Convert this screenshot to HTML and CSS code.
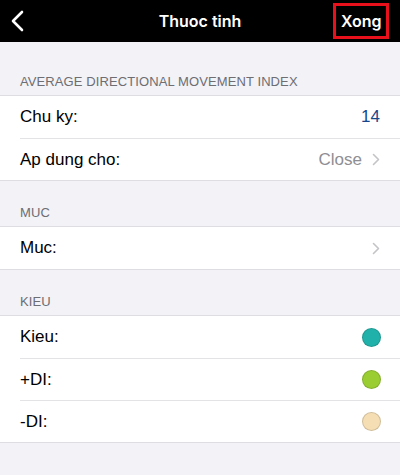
FILE: index.html
```html
<!DOCTYPE html>
<html>
<head>
<meta charset="utf-8">
<link rel="stylesheet" href="styles.css">
</head>
<body>
<div class="nav">
  <div class="nav-back">
    <svg width="14" height="22" viewBox="0 0 14 22"><polyline points="11,2 2,11 11,20" fill="none" stroke="#fff" stroke-width="2.6" stroke-linecap="round" stroke-linejoin="round"/></svg>
  </div>
  <div class="nav-title">Thuoc tinh</div>
  <div class="nav-done">Xong</div>
</div>

<div class="section-header first">AVERAGE DIRECTIONAL MOVEMENT INDEX</div>
<div class="group">
  <div class="row"><span class="label">Chu ky:</span><span class="value blue">14</span></div>
  <div class="row"><span class="label">Ap dung cho:</span><span class="value gray">Close</span><span class="chev"><svg width="8" height="13" viewBox="0 0 8 13"><polyline points="1.5,1.5 6.5,6.5 1.5,11.5" fill="none" stroke="#c4c4c8" stroke-width="1.6" stroke-linecap="round" stroke-linejoin="round"/></svg></span></div>
</div>

<div class="section-header">MUC</div>
<div class="group">
  <div class="row"><span class="label">Muc:</span><span class="chev"><svg width="8" height="13" viewBox="0 0 8 13"><polyline points="1.5,1.5 6.5,6.5 1.5,11.5" fill="none" stroke="#c4c4c8" stroke-width="1.6" stroke-linecap="round" stroke-linejoin="round"/></svg></span></div>
</div>

<div class="section-header">KIEU</div>
<div class="group">
  <div class="row"><span class="label">Kieu:</span><span class="dot teal"></span></div>
  <div class="row"><span class="label">+DI:</span><span class="dot green"></span></div>
  <div class="row"><span class="label">-DI:</span><span class="dot wheat"></span></div>
</div>
</body>
</html>
```

FILE: styles.css
```css
html, body {
  margin: 0;
  padding: 0;
  background: #f2f2f7;
  font-family: "Liberation Sans", Arial, sans-serif;
}

.nav {
  height: 42px;
  background: #000;
  display: flex;
  align-items: center;
  position: relative;
}

.nav-back {
  width: 14px;
  height: 22px;
  margin-left: 11px;
  display: flex;
}

.nav-title {
  position: absolute;
  left: 0;
  right: 0;
  top: 0;
  height: 42px;
  line-height: 42px;
  text-align: center;
  color: #fff;
  font-family: Inter, "Liberation Sans", sans-serif;
  font-size: 16px;
  font-weight: 600;
  pointer-events: none;
}

.nav-done {
  margin-left: auto;
  margin-right: 11px;
  border: 3px solid #e8101a;
  height: 30px;
  line-height: 30px;
  padding: 0 5px 0 5px;
  width: 40px;
  text-align: center;
  color: #fff;
  font-family: Inter, "Liberation Sans", sans-serif;
  font-size: 16px;
  font-weight: 600;
}

.section-header {
  padding: 24px 20px 5px 20px;
  font-size: 13px;
  line-height: 16px;
  color: #6d6d72;
  letter-spacing: 0.1px;
}

.section-header.first {
  padding-top: 32px;
}

.group {
  background: #fff;
  border-top: 1px solid #dedee2;
  border-bottom: 1px solid #dedee2;
}

.row {
  height: 42px;
  display: flex;
  align-items: center;
  padding: 0 20px;
}

.row + .row {
  height: 41px;
  border-top: 1px solid #e3e3e6;
  margin-left: 20px;
  padding-left: 0;
}

.label {
  font-size: 17px;
  color: #000;
  flex: 1;
}

.value {
  font-size: 17px;
}

.value.blue {
  color: #16478c;
}

.value.gray {
  color: #8e8e93;
}

.chev {
  display: flex;
  margin-left: 10px;
}

.dot {
  width: 17px;
  height: 17px;
  border-radius: 50%;
  border: 1px solid rgba(0, 0, 0, 0.15);
  margin-right: -1px;
}

.dot.teal { background: #20b2aa; }
.dot.green { background: #9acd32; }
.dot.wheat { background: #f5deb3; }
```
